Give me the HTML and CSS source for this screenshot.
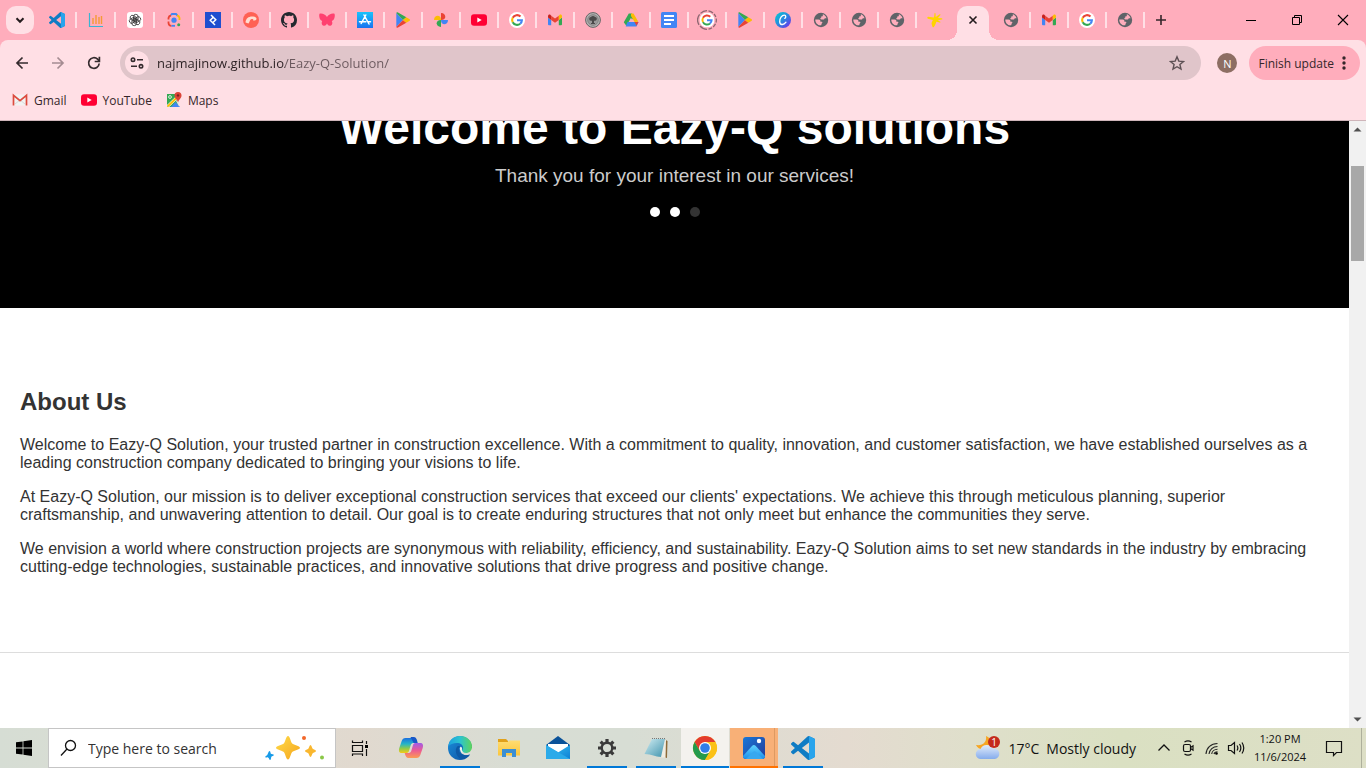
FILE: index.html
```html
<!DOCTYPE html>
<html lang="en">
<head>
<meta charset="utf-8">
<title>Eazy-Q Solution</title>
<link rel="stylesheet" href="styles.css">
</head>
<body>
<svg class="sprite" aria-hidden="true">
  <defs>
    <linearGradient id="gApp" x1="0" y1="0" x2="0" y2="1"><stop offset="0" stop-color="#19c3fb"/><stop offset="1" stop-color="#1a72f0"/></linearGradient>
    <linearGradient id="gCanva" x1="0" y1="0" x2="1" y2="1"><stop offset="0" stop-color="#00d0d0"/><stop offset=".5" stop-color="#2a87e0"/><stop offset="1" stop-color="#7b22ea"/></linearGradient>
    <linearGradient id="gEdge" x1="0" y1="0" x2="1" y2="0"><stop offset="0" stop-color="#1c9fe0"/><stop offset=".5" stop-color="#2cc4cf"/><stop offset="1" stop-color="#5fd45a"/></linearGradient>
    <linearGradient id="gEdge2" x1="0" y1="0" x2="1" y2="1"><stop offset="0" stop-color="#1b8fdb"/><stop offset="1" stop-color="#0c4fa0"/></linearGradient>
    <linearGradient id="gCopA" x1="0" y1="0" x2="0" y2="1"><stop offset="0" stop-color="#1b6fe0"/><stop offset=".4" stop-color="#25b5c8"/><stop offset=".7" stop-color="#8fca4c"/><stop offset="1" stop-color="#f6c916"/></linearGradient>
    <linearGradient id="gCopB" x1="0" y1="0" x2="0" y2="1"><stop offset="0" stop-color="#a05be8"/><stop offset=".5" stop-color="#ec5b93"/><stop offset="1" stop-color="#fb9b53"/></linearGradient>
    <linearGradient id="gStar" x1="0" y1="0" x2="1" y2="1"><stop offset="0" stop-color="#ffdc4a"/><stop offset="1" stop-color="#f5a51d"/></linearGradient>
    <linearGradient id="gFolder" x1="0" y1="0" x2="0" y2="1"><stop offset="0" stop-color="#ffdc72"/><stop offset="1" stop-color="#fbc63c"/></linearGradient>
    <linearGradient id="gMail" x1="0" y1="0" x2="1" y2="1"><stop offset="0" stop-color="#37c5f4"/><stop offset="1" stop-color="#0f7fd4"/></linearGradient>
    <linearGradient id="gNote" x1="0" y1="0" x2="1" y2="1"><stop offset="0" stop-color="#d2eef3"/><stop offset="1" stop-color="#3f93ad"/></linearGradient>
    <linearGradient id="gPhoto" x1="0" y1="0" x2="1" y2="1"><stop offset="0" stop-color="#1878d8"/><stop offset="1" stop-color="#263a98"/></linearGradient>
    <linearGradient id="gHill" x1="0" y1="0" x2="0" y2="1"><stop offset="0" stop-color="#5ed3ff"/><stop offset="1" stop-color="#1c8eea"/></linearGradient>
    <linearGradient id="gCloud" x1="0" y1="0" x2="0" y2="1"><stop offset="0" stop-color="#e3edfb"/><stop offset="1" stop-color="#85acec"/></linearGradient>
  </defs>
  <symbol id="vscode" viewBox="0 0 24 24"><path fill="#0f7cc4" d="M23.150 2.587 18.210.21a1.494 1.494 0 0 0-1.705.29l-9.460 8.630-4.120-3.128a1 1 0 0 0-1.276.057L.327 7.261a1 1 0 0 0 0 1.479L3.899 12 .326 15.260a1 1 0 0 0 0 1.479l1.323 1.201a1 1 0 0 0 1.276.057l4.120-3.128 9.460 8.630a1.492 1.492 0 0 0 1.704.29l4.942-2.377A1.500 1.500 0 0 0 24 20.060V3.939a1.500 1.500 0 0 0-.85-1.352zM18.004 17.448 10.826 12l7.178-5.448z"/><path fill="#29a4ec" d="M18 .1 23.150 2.587A1.500 1.500 0 0 1 24 3.940v16.120a1.500 1.500 0 0 1-.85 1.352L18 23.900z"/></symbol>
  <symbol id="chart" viewBox="0 0 16 16"><path d="M1.500 1v13.500H15" fill="none" stroke="#3ab4d3" stroke-width="1.200"/><path d="M5 12V6M8 12V3M11 12V5M13.500 12V4" stroke="#f49b35" stroke-width="1.400"/></symbol>
  <symbol id="gpt" viewBox="0 0 16 16"><rect width="16" height="16" rx="3" fill="#fff"/><g fill="none" stroke="#333" stroke-width=".8"><rect id="petal" x="6.500" y="2.300" width="4.600" height="7" rx="2.300"/><use href="#petal" transform="rotate(60 8 8)"/><use href="#petal" transform="rotate(120 8 8)"/><use href="#petal" transform="rotate(180 8 8)"/><use href="#petal" transform="rotate(240 8 8)"/><use href="#petal" transform="rotate(300 8 8)"/></g></symbol>
  <symbol id="lens" viewBox="0 0 16 16"><g fill="none" stroke-width="1.800"><path d="M2.500 7.500V6A3 3 0 0 1 5 3.500" stroke="#ea4335"/><path d="M5 3.200 6 2h4l1.500 1.500" stroke="#4285f4"/><path d="M11 3.500A3 3 0 0 1 13.500 6v2" stroke="#fbbc04"/><path d="M2.500 9.500V11A3 3 0 0 0 5.500 13.800" stroke="#ea4335"/><path d="M5.500 13.800h3.500" stroke="#4285f4"/></g><circle cx="8" cy="8.200" r="2.600" fill="#4285f4"/><circle cx="12.700" cy="12.800" r="1.500" fill="#34a853"/></symbol>
  <symbol id="toptal" viewBox="0 0 16 16"><path fill="#204ecf" d="M0 0h16v16H0z"/><path d="m6 3 4.800 4.700-3.600 3.600M10 13 5.200 8.300l3.600-3.600" fill="none" stroke="#fff" stroke-width="1.500"/></symbol>
  <symbol id="coral" viewBox="0 0 16 16"><circle cx="8" cy="8" r="8" fill="#ff6154"/><path d="M2.500 10.500c.3-4 3-6 6.500-6 2.800 0 4.500.8 4.500 2.200 0 1.300-1.500 2-3.500 2 .8-1 0-2-1.300-1.700C6.500 7.500 7 9.800 5.500 11.500z" fill="#ffded2"/></symbol>
  <symbol id="github" viewBox="0 0 16 16"><path fill="#24292f" d="M8 0C3.580 0 0 3.580 0 8c0 3.540 2.290 6.530 5.470 7.590.4.070.55-.17.55-.38 0-.19-.01-.82-.01-1.490-2.010.37-2.530-.49-2.690-.94-.09-.23-.48-.94-.82-1.130-.28-.15-.68-.52-.01-.53.63-.01 1.080.58 1.230.82.72 1.210 1.870.87 2.330.66.07-.52.28-.87.51-1.070-1.780-.2-3.640-.89-3.640-3.950 0-.87.31-1.590.82-2.150-.08-.2-.36-1.020.08-2.120 0 0 .67-.21 2.200.82A7.600 7.600 0 0 1 8 3.870c.68 0 1.360.09 2 .27 1.530-1.040 2.200-.82 2.200-.82.44 1.100.16 1.920.08 2.120.51.56.82 1.270.82 2.150 0 3.070-1.870 3.750-3.650 3.950.29.25.54.73.54 1.480 0 1.070-.01 1.930-.01 2.200 0 .21.15.46.55.38A8 8 0 0 0 16 8c0-4.420-3.580-8-8-8z"/></symbol>
  <symbol id="butterfly" viewBox="0 0 16 16"><path fill="#ff4170" d="M8 5C6.500 2.500 3 1 .5 1.800c-.8 2.500 0 6.200 2.700 7.200-1 1.600-.6 4.300 1.600 4.700C6.500 14 7.500 12.600 8 11.500c.5 1.100 1.500 2.500 3.200 2.200 2.200-.4 2.600-3.100 1.600-4.700 2.700-1 3.500-4.700 2.700-7.200C13 1 9.500 2.500 8 5z"/></symbol>
  <symbol id="appstore" viewBox="0 0 16 16"><path fill="url(#gApp)" d="M0 0h16v16H0z"/><path d="m8.800 3-4.600 8.500M7 3l5 9M2.500 9.800h6.300M10.800 9.800h2.700" fill="none" stroke="#fff" stroke-width="1.500" stroke-linecap="round"/></symbol>
  <symbol id="play" viewBox="0 0 16 16"><path fill="#4285f4" d="M1.300 1v14L8 8z"/><path fill="#34a853" d="M1.300 1c.2-.8 1-.8 1.700-.4l8.300 4.700L8 8z"/><path fill="#ea4335" d="M1.300 15c.2.8 1 .8 1.700.4l8.300-4.700L8 8z"/><path fill="#fbbc04" d="m11.300 5.300 3 1.700c1 .5 1 1.500 0 2l-3 1.700L8 8z"/></symbol>
  <symbol id="photos" viewBox="0 0 16 16"><path fill="#ea4335" d="M8 8V1c3 0 4.300 2 4.300 3.700C12.300 6.500 11 8 8 8z"/><path fill="#4285f4" d="M8 8h7c0 3-2 4.300-3.700 4.300C9.500 12.300 8 11 8 8z"/><path fill="#34a853" d="M8 8v7c-3 0-4.300-2-4.300-3.700C3.700 9.500 5 8 8 8z"/><path fill="#fbbc04" d="M8 8H1c0-3 2-4.300 3.700-4.300C6.500 3.700 8 5 8 8z"/></symbol>
  <symbol id="youtube" viewBox="0 0 16 16"><rect y="2.300" width="16" height="11.400" rx="3" fill="#ff0033"/><path fill="#fff" d="m6.300 5.500 4.400 2.500-4.400 2.500z"/></symbol>
  <symbol id="google" viewBox="0 0 16 16"><circle cx="8" cy="8" r="8" fill="#fff"/><g fill="none" stroke-width="2.100"><path stroke="#ea4335" d="M3.700 5.700A4.900 4.900 0 0 1 11.500 4.600"/><path stroke="#fbbc04" d="M3.700 10.300a4.900 4.900 0 0 1 0-4.600"/><path stroke="#34a853" d="M11.200 11.700A4.900 4.900 0 0 1 3.700 10.300"/><path stroke="#4285f4" d="M8 8.200h4.900a4.900 4.900 0 0 1-1.700 3.500"/></g></symbol>
  <symbol id="googleRing" viewBox="0 0 20 20"><path d="M10 .7A9.300 9.300 0 0 0 3.500 3.400M2.600 4.400A9.300 9.300 0 0 0 2 14.800M3 16A9.300 9.300 0 0 0 10 19.300M11.500 19.200A9.300 9.300 0 0 0 15 17.800M16.200 16.900A9.300 9.300 0 0 0 18.500 13.800M19 12.500A9.300 9.300 0 0 0 19.200 8.500M18.800 7A9.300 9.300 0 0 0 17 4M16 3A9.300 9.300 0 0 0 11.500.8" fill="none" stroke="#8d6771" stroke-width="1.300"/><use href="#google" x="2.500" y="2.500" width="15" height="15"/></symbol>
  <symbol id="gmail" viewBox="0 0 16 16"><path fill="#4285f4" d="M1 5.500 4.200 8v5.200H2a1 1 0 0 1-1-1z"/><path fill="#34a853" d="M11.800 8 15 5.500v6.700a1 1 0 0 1-1 1h-2.200z"/><path fill="#ea4335" d="M4.200 3.700 8 6.500l3.800-2.800V8L8 10.800 4.200 8z"/><path fill="#c5221f" d="M1 4.200c0-1.700 1.700-2 2.500-1.300l.7.800V8L1 5.500z"/><path fill="#fbbc04" d="M15 4.200c0-1.700-1.700-2-2.500-1.300l-.7.800V8L15 5.500z"/></symbol>
  <symbol id="gmailOld" viewBox="0 0 16 16"><path fill="#f2f2f2" d="M1 2.500h14v11H1z"/><path d="m3 12 5-4 5 4" fill="none" stroke="#d8d8d8"/><path d="M1.500 13.500V3.300L8 8.600l6.500-5.300v10.200" fill="none" stroke="#dd4b3f" stroke-width="1.700"/></symbol>
  <symbol id="tree" viewBox="0 0 16 16"><circle cx="8" cy="8" r="7.400" fill="#b5b5b5" stroke="#666" stroke-width="1"/><circle cx="8" cy="8" r="5.400" fill="#999" stroke="#707070" stroke-width=".6"/><path fill="#4a4a4a" d="M4.300 7.500A2 2 0 0 1 6 5a2.500 2.500 0 0 1 4 0 2 2 0 0 1 1.700 2.500C11 9 10 8.600 9 8.700V11h1v1H6v-1h1V8.700c-1-.1-2 .3-2.700-1.200z"/></symbol>
  <symbol id="drive" viewBox="0 0 16 16"><path fill="#34a853" d="M5.800 1.500h3L11 5.300 3.500 14 .8 10.200z"/><path fill="#fbbc04" d="M8 1.500h2.500l4.800 8.300-3.700.2L8 4z"/><path fill="#4285f4" d="M4.500 10h11l-2 4.400H2.700z"/><path fill="#ffadbc" d="m8 5.800 2.400 4.200H5.600z"/><path fill="#ea4335" d="M11.500 10h4l-2 3.800z"/></symbol>
  <symbol id="docs" viewBox="0 0 16 16"><rect width="16" height="16" rx="1.500" fill="#4285f4"/><path d="M3 4h10M3 8h10M3 12h7" stroke="#fff" stroke-width="1.900"/></symbol>
  <symbol id="canva" viewBox="0 0 16 16"><circle cx="8" cy="8" r="8" fill="url(#gCanva)"/><path d="M9.800 6.400c1.300-.8 1.400-3.200-.4-3.200C6.700 3.200 4.700 6.500 4.700 9.400c0 4 4 4 6.300.8" fill="none" stroke="#fff" stroke-width="1.300" stroke-linecap="round"/></symbol>
  <symbol id="globe" viewBox="0 0 16 16"><circle cx="8" cy="8" r="7.200" fill="#5f6368"/><path fill="#ffadbc" d="M9.800 2.300c1.800.6 3.200 2 3.700 3.900l-1.700.1-.8 1.200H8.400c-1.100 0-1.400-1-.8-1.500l.8-.7V4.200h1.400zM2.300 7.500h3.200c1.700 0 2.200 1 1.600 1.900l1.600.4c1 .3.800 1.500 0 1.600l-.5 1.900C5 13.800 2.200 11 2.300 7.500z"/></symbol>
  <symbol id="splash" viewBox="0 0 16 16"><path fill="#ffd400" d="M7.600 1c.7-.3 1 .2 1 1.400L8.700 5l3.600-2.600c.8-.6 1.500 0 .9.800L11 6l3.700.2c.9 0 .9 1.300 0 1.400l-3.800.7 2.400 1.500c.5.300 0 1-.6.8L9.400 9.700c-.7 2-1.300 3.700-2.500 5.300-.6.600-1.600.2-1.500-.6L4.600 12c-.2-.8.400-2.500 1.200-4L.9 6.800C0 6.500.2 5 1.100 4.800L7 5.500z"/></symbol>
  <symbol id="maps" viewBox="0 0 16 16"><path fill="#34a853" d="M1 2h12v13H1z"/><path fill="#4285f4" d="m5 15 4.500-5 4.500 5z"/><path fill="#e5e5e5" d="m10 9 3-3v8.500z"/><path d="M1.500 14.500 12 4.500" stroke="#fff" stroke-width="3"/><path d="M1.500 14.500 12 4.500" stroke="#fbbc04" stroke-width="1.800"/><circle cx="4" cy="5" r="1.400" fill="none" stroke="#fff" stroke-width=".8"/><path fill="#db4437" d="M12 0a3.500 3.500 0 0 1 3.500 3.500C15.500 6 13 7 12 10.500 11 7 8.500 6 8.500 3.500A3.500 3.500 0 0 1 12 0z"/><circle cx="12" cy="3.400" r="1.200" fill="#7b231d"/></symbol>
</svg>

<div class="window">
  <header class="browser">
    <div class="tabs">
      <button class="tab-search" aria-label="Search tabs"><svg width="16" height="16" viewBox="0 0 16 16"><path d="m4.500 6.300 3.500 3.500 3.500-3.500" fill="none" stroke="#241c1e" stroke-width="2"/></svg></button>
      <button class="tab tab-wide" aria-label="Tab 1"><svg class="fav"><use href="#vscode"/></svg></button>
      <button class="tab tab-wide" aria-label="Tab 2"><svg class="fav"><use href="#chart"/></svg></button>
      <button class="tab tab-wide" aria-label="Tab 3"><svg class="fav"><use href="#gpt"/></svg></button>
      <button class="tab tab-wide" aria-label="Tab 4"><svg class="fav"><use href="#lens"/></svg></button>
      <button class="tab tab-wide" aria-label="Tab 5"><svg class="fav"><use href="#toptal"/></svg></button>
      <button class="tab" aria-label="Tab 6"><svg class="fav"><use href="#coral"/></svg></button>
      <button class="tab" aria-label="Tab 7"><svg class="fav"><use href="#github"/></svg></button>
      <button class="tab" aria-label="Tab 8"><svg class="fav"><use href="#butterfly"/></svg></button>
      <button class="tab" aria-label="Tab 9"><svg class="fav"><use href="#appstore"/></svg></button>
      <button class="tab" aria-label="Tab 10"><svg class="fav"><use href="#play"/></svg></button>
      <button class="tab" aria-label="Tab 11"><svg class="fav"><use href="#photos"/></svg></button>
      <button class="tab" aria-label="Tab 12"><svg class="fav"><use href="#youtube"/></svg></button>
      <button class="tab" aria-label="Tab 13"><svg class="fav"><use href="#google"/></svg></button>
      <button class="tab" aria-label="Tab 14"><svg class="fav"><use href="#gmail"/></svg></button>
      <button class="tab" aria-label="Tab 15"><svg class="fav"><use href="#tree"/></svg></button>
      <button class="tab" aria-label="Tab 16"><svg class="fav"><use href="#drive"/></svg></button>
      <button class="tab" aria-label="Tab 17"><svg class="fav"><use href="#docs"/></svg></button>
      <button class="tab" aria-label="Tab 18"><svg class="fav-ring"><use href="#googleRing"/></svg></button>
      <button class="tab" aria-label="Tab 19"><svg class="fav"><use href="#play"/></svg></button>
      <button class="tab" aria-label="Tab 20"><svg class="fav"><use href="#canva"/></svg></button>
      <button class="tab" aria-label="Tab 21"><svg class="fav"><use href="#globe"/></svg></button>
      <button class="tab" aria-label="Tab 22"><svg class="fav"><use href="#globe"/></svg></button>
      <button class="tab" aria-label="Tab 23"><svg class="fav"><use href="#globe"/></svg></button>
      <button class="tab tab-plain" aria-label="Tab 24"><svg class="fav"><use href="#splash"/></svg></button>
      <button class="tab-active" aria-label="Close tab"><svg width="16" height="16" viewBox="0 0 16 16"><path d="m4.500 4.500 7 7m0-7-7 7" stroke="#241c1e" stroke-width="1.600"/></svg></button>
      <button class="tab" aria-label="Tab 26"><svg class="fav"><use href="#globe"/></svg></button>
      <button class="tab" aria-label="Tab 27"><svg class="fav"><use href="#gmail"/></svg></button>
      <button class="tab" aria-label="Tab 28"><svg class="fav"><use href="#google"/></svg></button>
      <button class="tab" aria-label="Tab 29"><svg class="fav"><use href="#globe"/></svg></button>
      <button class="new-tab" aria-label="New tab"><svg width="16" height="16" viewBox="0 0 16 16"><path d="M8 3v10M3 8h10" stroke="#35262a" stroke-width="1.600"/></svg></button>
      <div class="window-controls">
        <button aria-label="Minimize"><svg width="12" height="12" viewBox="0 0 12 12"><path d="M1 6.500h10" stroke="#000"/></svg></button>
        <button aria-label="Restore"><svg width="12" height="12" viewBox="0 0 12 12"><path d="M1.500 3.500h7v7h-7zM3.500 3.500v-2h7v7h-2" fill="none" stroke="#000"/></svg></button>
        <button aria-label="Close"><svg width="12" height="12" viewBox="0 0 12 12"><path d="m1 1 10 10M11 1 1 11" stroke="#000" stroke-width="1.100"/></svg></button>
      </div>
    </div>
    <div class="chrome-panel">
      <div class="toolbar">
        <button class="nav" aria-label="Back"><svg width="16" height="16" viewBox="0 0 16 16"><path d="M14 8H3m5.500-5.500L3 8l5.500 5.500" fill="none" stroke="#352b2e" stroke-width="1.700"/></svg></button>
        <button class="nav" aria-label="Forward"><svg width="16" height="16" viewBox="0 0 16 16"><path d="M2 8h11M7.500 2.500 13 8l-5.500 5.500" fill="none" stroke="#a58c92" stroke-width="1.700"/></svg></button>
        <button class="nav" aria-label="Reload"><svg width="16" height="16" viewBox="0 0 16 16"><path d="M13.200 8.500a5.300 5.300 0 1 1-1.600-4.300l1.500 1.600" fill="none" stroke="#352b2e" stroke-width="1.700"/><path d="M13.400 1.800v4.700H8.700" fill="none" stroke="#352b2e" stroke-width="1.700"/></svg></button>
        <div class="omnibox">
          <button class="site-info" aria-label="View site information"><svg width="16" height="16" viewBox="0 0 16 16"><g fill="none" stroke="#352b2e" stroke-width="1.600"><circle cx="4" cy="4.700" r="1.700"/><path d="M8 4.700h6M2 11.300h6"/><circle cx="12" cy="11.300" r="1.700"/></g></svg></button>
          <input class="url" type="text" aria-label="Address" value="najmajinow.github.io/Eazy-Q-Solution/">
          <button class="star" aria-label="Bookmark this page"><svg width="16" height="16" viewBox="0 0 16 16"><path d="m8 1.800 1.800 4.300 4.700.4-3.600 3 1.100 4.600L8 11.700l-4 2.400 1.100-4.600-3.600-3 4.700-.4z" fill="none" stroke="#5d5054" stroke-width="1.400"/></svg></button>
        </div>
        <button class="avatar" aria-label="Profile">N</button>
        <button class="update">Finish update<svg width="4" height="16" viewBox="0 0 4 16"><g fill="#35262a"><circle cx="2" cy="3" r="1.700"/><circle cx="2" cy="8" r="1.700"/><circle cx="2" cy="13" r="1.700"/></g></svg></button>
      </div>
      <nav class="bookmarks">
        <a href="#"><svg class="fav"><use href="#gmailOld"/></svg>Gmail</a>
        <a href="#"><svg class="fav"><use href="#youtube"/></svg>YouTube</a>
        <a href="#"><svg class="fav"><use href="#maps"/></svg>Maps</a>
      </nav>
    </div>
  </header>

  <div class="viewport">
    <main class="page">
      <section class="hero">
        <h1>Welcome to Eazy-Q solutions</h1>
        <p>Thank you for your interest in our services!</p>
        <div class="dots"><span></span><span></span><span class="dim"></span></div>
      </section>
      <section class="about">
        <h2>About Us</h2>
        <p>Welcome to Eazy-Q Solution, your trusted partner in construction excellence. With a commitment to quality, innovation, and customer satisfaction, we have established ourselves as a leading construction company dedicated to bringing your visions to life.</p>
        <p>At Eazy-Q Solution, our mission is to deliver exceptional construction services that exceed our clients' expectations. We achieve this through meticulous planning, superior craftsmanship, and unwavering attention to detail. Our goal is to create enduring structures that not only meet but enhance the communities they serve.</p>
        <p>We envision a world where construction projects are synonymous with reliability, efficiency, and sustainability. Eazy-Q Solution aims to set new standards in the industry by embracing cutting-edge technologies, sustainable practices, and innovative solutions that drive progress and positive change.</p>
      </section>
    </main>
    <div class="scrollbar">
      <svg width="17" height="17" viewBox="0 0 17 17"><path fill="#505050" d="m4.500 10.500 4-4 4 4z"/></svg>
      <div class="track"><div class="thumb"></div></div>
      <svg width="17" height="17" viewBox="0 0 17 17"><path fill="#505050" d="m4.500 6.500 4 4 4-4z"/></svg>
    </div>
  </div>

  <footer class="taskbar">
    <button class="start" aria-label="Start"><svg width="16" height="16" viewBox="0 0 16 16"><path d="m0 2.300 6.600-.9v6.200H0zM7.400 1.300 16 0v7.600H7.400zM0 8.400h6.600v6.200L0 13.700zM7.400 8.400H16V16l-8.600-1.200z"/></svg></button>
    <label class="search">
      <svg width="18" height="18" viewBox="0 0 18 18"><g fill="none" stroke="#111" stroke-width="1.300"><circle cx="10.500" cy="6.500" r="5"/><path d="m7 10-6 6.500"/></g></svg>
      <input type="text" aria-label="Search" placeholder="Type here to search">
      <svg width="62" height="26" viewBox="0 0 62 26"><path fill="url(#gStar)" d="M24 1c2 0 2.700 6 4.200 7.500S36 11 36 12.800s-6.300 2.700-7.800 4.200S26 24.500 24 24.500 21.300 18.500 19.800 17 12 14.600 12 12.800s6.300-2.800 7.800-4.300S22 1 24 1z"/><path fill="#f9b72f" d="M46.500 10c1 0 1.400 3 2.200 3.800S52 15 52 16s-2.500 1.400-3.300 2.200-1.200 3.800-2.200 3.800-1.400-3-2.200-3.800S41 17 41 16s2.500-1.400 3.300-2.200 1.200-3.800 2.200-3.800z"/><path fill="#189be8" d="M5.700 16c.9.300.7 2.200 1.200 2.800s3 .3 3 1.200-2 1.200-2.500 1.700-.2 3.200-1.200 3.200-1.200-1.700-1.700-2.200-3.200.2-3.200-.8 1.500-1.400 2-2S4.700 15.700 5.700 16z"/><circle cx="40" cy="3" r="2" fill="#f2672a"/><circle cx="58" cy="22.500" r="2" fill="#8ac748"/></svg>
    </label>
    <button class="task" aria-label="Task View"><svg width="18" height="18" viewBox="0 0 18 18"><path d="M1.500 1.500v2h10v-2M1.500 6.500h10v6h-10zM1.500 17v-2h10v2M15.500 2v3M15.500 10v7" fill="none" stroke="#111" stroke-width="1.200"/><path d="M14 6h3v3h-3z"/></svg></button>
    <div class="apps">
      <button class="task" aria-label="Copilot"><svg width="26" height="26" viewBox="0 0 26 26"><path fill="url(#gCopA)" d="M7.500 3h8c2 0 2.700 1.500 3.200 3l.6 2h-4c-1.500 0-2.300 1-2.700 2.500L11 16c-.5 1.600-1.400 2-3 2H4c-3 0-3.500-2-2.700-5L3.700 6C4.400 4 5.500 3 7.500 3z"/><path fill="#1858c8" d="M12.500 2h3.200c2 0 2.700 1.500 3.200 3l.8 3h-4z"/><path fill="url(#gCopB)" d="M18.500 23h-8c-2 0-2.700-1.500-3.200-3l-.6-2h4c1.500 0 2.300-1 2.700-2.500L15 10c.5-1.600 1.400-2 3-2h4c3 0 3.500 2 2.700 5l-2.400 7c-.7 2-1.800 3-3.800 3z"/></svg></button>
      <button class="task open" aria-label="Edge"><svg width="26" height="26" viewBox="0 0 26 26"><circle cx="13" cy="13" r="12" fill="url(#gEdge2)"/><path fill="#dcddd5" d="M25 13v6.200c-3 2.300-11 1.500-11.500-3.200z"/><path fill="url(#gEdge)" d="M1.200 11.500C2 5 7 1 13 1c7 0 12 5 12 10.500 0 4.500-3 6.500-6 6.500-2.500 0-4-1-4-2.500 0-.7 1-1.200 1-3C16 10 13.500 8 10 8c-4 0-7 1.300-8.800 3.500z"/><path fill="#0d59a5" d="M10.300 11.500c-3 3-1.300 10.500 4.200 12.800 3.700-.5 7-2.500 8.700-5-6 2.500-11.500-.3-11.500-5 0-1.300.6-2.300 1.500-3-1.100-.4-2.200-.3-2.900.2z"/><path fill="#f2f4ef" d="M13.500 11.700c1.300.3 1.900 1.500 1.500 2.300-.5 1.300.3 3 2 3.600-3 .3-5.500-3.600-3.500-5.900z"/></svg></button>
      <button class="task" aria-label="File Explorer"><svg width="24" height="24" viewBox="0 0 24 24"><path fill="#e1a11a" d="M1 3h8l2 2v3H1z"/><path fill="url(#gFolder)" d="M1 6h10l1-1.500h11v15H1z"/><path fill="#3c8fd3" d="M5 13h14v8h-4v-4H9v4H5z"/></svg></button>
      <button class="task" aria-label="Mail"><svg width="26" height="26" viewBox="0 0 26 26"><path fill="#0a5299" d="M1 10 13 1l12 9v3H1z"/><path fill="#fff" d="M3 9h20v6l-10 7L3 15z"/><path fill="url(#gMail)" d="M1 10l12 7.500L25 10v14H1z"/><path fill="#2baae9" d="m1 10 24 14H1z"/></svg></button>
      <button class="task open" aria-label="Settings"><svg width="20" height="20" viewBox="0 0 20 20"><circle cx="10" cy="10" r="5.300" fill="none" stroke="#3a3a3a" stroke-width="2.400"/><g stroke="#3a3a3a" stroke-width="3.200"><path id="cog" d="M10 1v3.500M10 15.500V19"/><use href="#cog" transform="rotate(45 10 10)"/><use href="#cog" transform="rotate(90 10 10)"/><use href="#cog" transform="rotate(135 10 10)"/></g></svg></button>
      <button class="task open" aria-label="Notepad"><svg width="26" height="26" viewBox="0 0 26 26"><path fill="#8d6a38" d="m21 4 3.500 2L24 23l-4-1z"/><path fill="#f0ede2" d="m20 4 3 1-.5 18-6.500-1z"/><path fill="url(#gNote)" d="M9 4h13l-4 18c-6 0-9-3-16.500-3z"/><path d="M9 3.500h13" stroke="#777" stroke-dasharray="1 1"/></svg></button>
      <button class="task current" aria-label="Chrome"><svg width="26" height="26" viewBox="0 0 26 26"><circle cx="13" cy="13" r="12" fill="#fbc116"/><path fill="#e33b2e" d="M2.600 7A12 12 0 0 1 23.400 7H13l-5.200 9z"/><path fill="#249a4c" d="M2.600 7A12 12 0 0 0 13 25l5.200-9H7.800z"/><path fill="#fbc116" d="M23.400 7A12 12 0 0 1 13 25l5.200-9L18 10 13 7z"/><circle cx="13" cy="13" r="6" fill="#fff"/><circle cx="13" cy="13" r="4.800" fill="#2f7de9"/></svg></button>
      <button class="task alert" aria-label="Photos"><svg width="24" height="24" viewBox="0 0 24 24"><rect x="1" y="1" width="22" height="22" rx="3" fill="url(#gPhoto)"/><path fill="url(#gHill)" d="M1 20 10 10c1.300-1.400 2.500-1.400 3.800 0L23 20c0 2-1 3-3 3H4c-2 0-3-1-3-3z"/><path fill="#38a8ef" d="m4 23 7-7c1-1 2-1 3 0l7 7z"/><circle cx="17" cy="5" r="2.200" fill="#fff"/></svg></button>
      <button class="task open" aria-label="Visual Studio Code"><svg width="24" height="24"><use href="#vscode"/></svg></button>
    </div>
    <div class="tray">
      <button class="weather"><svg width="26" height="26" viewBox="0 0 26 26"><path fill="#f6a623" d="M11 1c1 6-3 10-10 9 2 5 10 6 14 1S15 3 11 1z"/><path fill="url(#gCloud)" d="M6 24a5 5 0 0 1-.5-10A7 7 0 0 1 18 13.500 5.300 5.300 0 0 1 20 24z"/><circle cx="19" cy="7" r="6" fill="#c42b1c"/><text x="19" y="10.500" class="badge-text">1</text></svg><span>17°C</span><span>Mostly cloudy</span></button>
      <button class="tray-icon" aria-label="Show hidden icons"><svg width="14" height="14" viewBox="0 0 14 14"><path d="m1.500 9.500 5.500-5.500 5.500 5.500" fill="none" stroke="#111" stroke-width="1.300"/></svg></button>
      <button class="tray-icon" aria-label="Meet Now"><svg width="14" height="18" viewBox="0 0 14 18"><g fill="none" stroke="#111" stroke-width="1.200"><rect x="2.500" y="5.500" width="7" height="7" rx="1.500"/><path d="m9.500 8.500 2.500-1.700v4.400L9.500 9.500M3.500 3C5.500 1.700 8.500 1.700 10.500 3M3.500 15c2 1.300 5 1.300 7 0"/></g></svg></button>
      <button class="tray-icon" aria-label="Network"><svg width="16" height="16" viewBox="0 0 16 16"><g fill="none" stroke="#222" stroke-width="1.100"><path d="M2 14C2.500 7.500 7 3.500 13.500 3.500M5 14c.5-4.500 4-7.500 8.500-7.500M7.700 14c.3-2.500 2.600-4.700 5.800-4.700M10 14c.3-1.200 1.500-2.200 3.500-2.200"/></g><circle cx="12.500" cy="13.500" r="1.300"/></svg></button>
      <button class="tray-icon" aria-label="Volume"><svg width="18" height="16" viewBox="0 0 18 16"><g fill="none" stroke="#111" stroke-width="1.200"><path d="M1.500 5.500H4L7.500 2.500v11L4 10.500H1.500zM10 5.500q1.700 2.500 0 5M12.500 4q2.700 4 0 8M15 2.500q3.500 5.500 0 11"/></g></svg></button>
      <button class="clock"><span>1:20 PM</span><span>11/6/2024</span></button>
      <button class="notes" aria-label="Notifications"><svg width="18" height="18" viewBox="0 0 18 18"><path d="M1.500 2.500h15v11h-5l-3 3v-3h-7z" fill="none" stroke="#111" stroke-width="1.200"/></svg></button>
    </div>
  </footer>
</div>
</body>
</html>
```
FILE: styles.css
```css
* { box-sizing: border-box; }

body {
  margin: 0;
  font-family: "Liberation Sans", Arial, sans-serif;
}

button {
  display: flex;
  align-items: center;
  justify-content: center;
  flex: none;
  padding: 0;
  border: 0;
  background: none;
  color: inherit;
  font: inherit;
  white-space: nowrap;
}

svg { display: block; flex: none; }
.sprite { position: absolute; width: 0; height: 0; }
.fav { width: 16px; height: 16px; }
.fav-ring { width: 20px; height: 20px; }

.window {
  display: flex;
  flex-direction: column;
  height: 100vh;
  overflow: hidden;
}

/* Browser chrome */
.browser {
  flex: none;
  background: #ffadbc;
  color: #35262a;
  font-family: "Open Sans", "Noto Sans", sans-serif;
  font-size: 12px;
}

.tabs { display: flex; align-items: center; height: 40px; padding-left: 6px; }

.tab-search {
  width: 28px;
  height: 28px;
  margin-right: 4px;
  border-radius: 10px;
  background: #ffdfe5;
}

.tab {
  width: 38px;
  height: 16px;
  border-right: 2px solid #ffdfe5;
}
.tab-wide { width: 39px; }
.tab-plain { border-color: transparent; }

.tab-active {
  position: relative;
  align-self: flex-end;
  width: 32px;
  height: 34px;
  margin: 0 4px 0 2px;
  padding-bottom: 6px;
  border-radius: 10px 10px 0 0;
  background: #ffdfe5;
}
.tab-active::before,
.tab-active::after {
  content: "";
  position: absolute;
  bottom: 0;
  width: 10px;
  height: 10px;
}
.tab-active::before { right: 100%; background: radial-gradient(circle at 0 0, transparent 10px, #ffdfe5 10px); }
.tab-active::after { left: 100%; background: radial-gradient(circle at 100% 0, transparent 10px, #ffdfe5 10px); }

.new-tab { width: 32px; height: 28px; }

.window-controls { display: flex; margin-left: auto; }
.window-controls button { width: 46px; height: 40px; }

.chrome-panel {
  border-bottom: 1px solid #cfb5ba;
  border-radius: 8px 8px 0 0;
  background: #ffdfe5;
}

.toolbar {
  display: flex;
  align-items: center;
  height: 46px;
  padding: 0 6px 0 4px;
}
.nav { width: 36px; height: 34px; }

.omnibox {
  display: flex;
  align-items: center;
  flex: 1;
  height: 34px;
  margin: 0 16px 0 8px;
  padding: 0 16px 0 5px;
  border-radius: 17px;
  background: #e0c5ca;
}
.site-info { width: 24px; height: 24px; border-radius: 50%; background: #ffdfe5; }
.url {
  flex: 1;
  min-width: 0;
  height: 24px;
  margin-left: 8px;
  padding: 0;
  border: 0;
  outline: 0;
  background: linear-gradient(90deg, #2b2023 128px, #6a585d 128px) text;
  color: #2b2023;
  -webkit-text-fill-color: transparent;
  font: 13px "Open Sans", "Noto Sans", sans-serif;
}

.avatar {
  width: 20px;
  height: 20px;
  margin-right: 12px;
  border-radius: 50%;
  background: #8d6e63;
  color: #fff;
  font-size: 11px;
}
.update {
  gap: 8px;
  height: 34px;
  padding: 0 14px 0 9px;
  border-radius: 17px;
  background: #ffadbc;
}

.bookmarks {
  display: flex;
  align-items: center;
  gap: 14px;
  height: 34px;
  padding: 0 12px 6px;
}
.bookmarks a {
  display: flex;
  align-items: center;
  gap: 6px;
  color: inherit;
  text-decoration: none;
}

/* Visible part of the site */
.viewport { display: flex; flex: 1; min-height: 0; background: #fff; }
.page { flex: 1; min-width: 0; overflow: hidden; color: #333; }

.hero {
  display: flex;
  flex-direction: column;
  align-items: center;
  justify-content: flex-end;
  height: 187px;
  padding-bottom: 91px;
  overflow: hidden;
  background: #000;
  color: #fff;
}
.hero h1 { margin: 0 0 13px; font-size: 48px; line-height: 48px; }
.hero p { margin: 0 0 20px; color: #ccc; font-size: 19px; line-height: 22px; }
.dots { display: flex; gap: 10px; }
.dots span { width: 10px; height: 10px; border-radius: 50%; background: #fff; }
.dots .dim { background: #333; }

.about { padding: 80px 20px 60px; border-bottom: 1px solid #ddd; }
.about h2 { margin: 0 0 20px; font-size: 24px; line-height: 28px; }
.about p { margin: 0 0 16px; font-size: 16px; line-height: 18px; }

.scrollbar {
  display: flex;
  flex-direction: column;
  width: 17px;
  background: #f1f1f1;
}
.track { flex: 1; padding: 28px 2px 0; }
.thumb { height: 95px; background: #a8a8a8; }

/* Taskbar */
.taskbar {
  display: flex;
  flex: none;
  height: 40px;
  background: linear-gradient(90deg, #d6ddd4 0, #dcddd3 14%, #e1d9cf 26%, #d8ddd4 38%, #d7ddd4 46%, #e4dbd0 62%, #dfdfcb 71%, #dae0c2 82%, #dddfc6 100%);
  color: #111;
  font-family: "Open Sans", "Noto Sans", sans-serif;
  font-size: 14px;
}
.start, .task { width: 48px; height: 40px; }
.search {
  display: flex;
  align-items: center;
  width: 288px;
  padding: 0 9px 0 11px;
  border: 1px solid #c5c5c5;
  background: #fff;
}
.search input {
  flex: 1;
  min-width: 0;
  margin-left: 10px;
  padding: 0;
  border: 0;
  outline: 0;
  background: none;
  font: inherit;
}
.search input::placeholder { color: #333; }

.apps { display: flex; gap: 1px; margin-left: 3px; }
.open {
  background: linear-gradient(#0078d7, #0078d7) center bottom / 40px 2px no-repeat;
}
.current {
  background: linear-gradient(#0078d7, #0078d7) center bottom / 48px 2px no-repeat #f4f2ee;
}
.alert {
  background:
    linear-gradient(#ff7200, #ff7200) center bottom / 48px 2px no-repeat,
    linear-gradient(#dd9a62, #dd9a62) 44px 0 / 1px 40px no-repeat #f8b077;
}

.tray { display: flex; align-items: center; margin-left: auto; padding-right: 4px; }
.weather { gap: 7px; margin-right: 16px; }
.badge-text { fill: #fff; font-size: 10px; text-anchor: middle; }
.tray-icon { width: 24px; height: 40px; }
.clock {
  flex-direction: column;
  width: 52px;
  height: 40px;
  margin-left: 6px;
  font-size: 11px;
  line-height: 18px;
}
.notes { width: 56px; height: 40px; border-right: 1px solid #aeb09c; }
```
